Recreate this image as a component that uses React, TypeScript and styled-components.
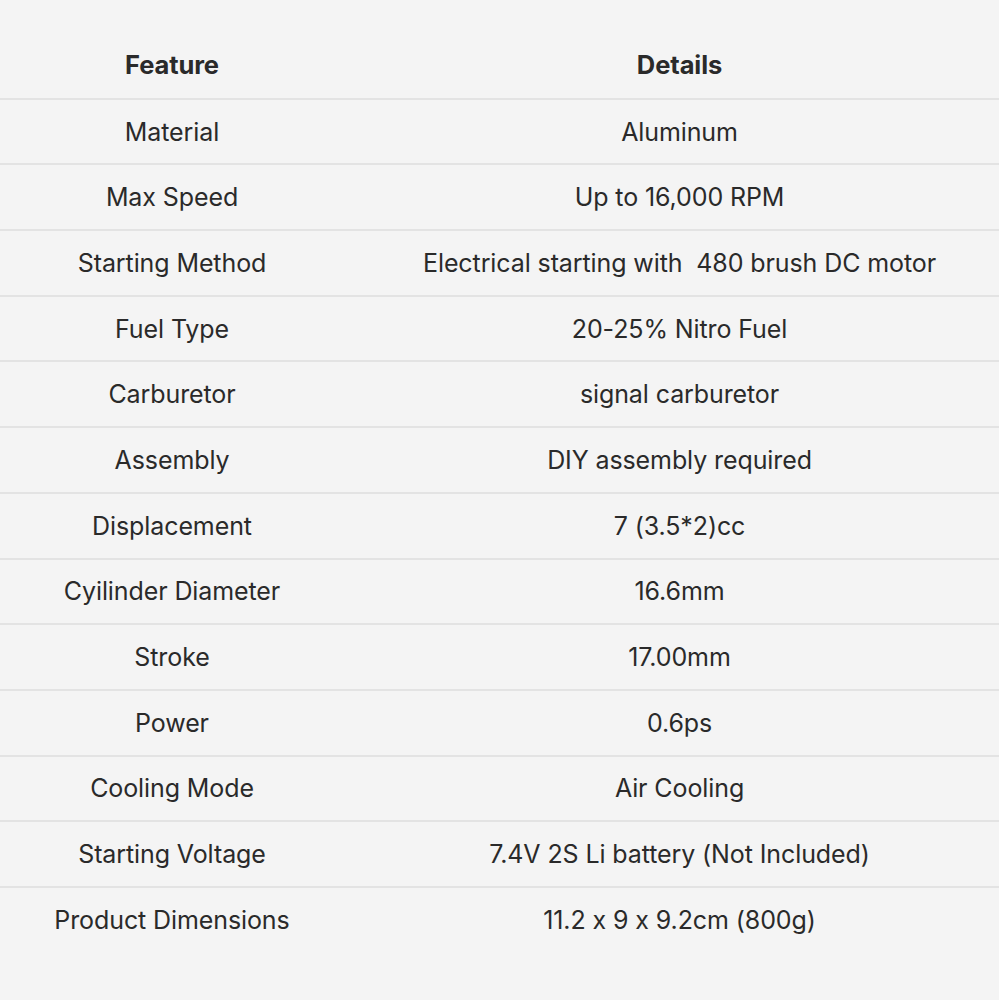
import React, { FC, ReactElement } from 'react';
import styled, { createGlobalStyle } from 'styled-components';

const GlobalStyle = createGlobalStyle`
  html, body {
    margin: 0;
    padding: 0;
    background: #f4f4f4;
    overflow-x: hidden;
  }
  body {
    font-family: Inter, "Noto Sans", sans-serif;
    font-feature-settings: "calt" 0;
    color: #2a2a2a;
  }
`;

const specList = [
  { feature: 'Material', details: 'Aluminum' },
  { feature: 'Max Speed', details: 'Up to 16,000 RPM' },
  {
    feature: 'Starting Method',
    details: 'Electrical starting with \u00a0480 brush DC motor',
  },
  { feature: 'Fuel Type', details: '20-25% Nitro Fuel' },
  { feature: 'Carburetor', details: 'signal carburetor' },
  { feature: 'Assembly', details: 'DIY assembly required' },
  { feature: 'Displacement', details: '7 (3.5*2)cc' },
  { feature: 'Cyilinder Diameter', details: '16.6mm' },
  { feature: 'Stroke', details: '17.00mm' },
  { feature: 'Power', details: '0.6ps' },
  { feature: 'Cooling Mode', details: 'Air Cooling' },
  {
    feature: 'Starting Voltage',
    details: '7.4V 2S Li battery (Not Included)',
  },
  { feature: 'Product Dimensions', details: '11.2 x 9 x 9.2cm (800g)' },
];

const App: FC = (): ReactElement => {
  return (
    <>
      <GlobalStyle />
      <Page>
        <SpecTable>
          <Row $head>
            <Cell $head>Feature</Cell>
            <Cell $head $wide>
              Details
            </Cell>
          </Row>
          {specList.map((spec, idx) => {
            return (
              <Row key={idx}>
                <Cell>{spec.feature}</Cell>
                <Cell $wide>{spec.details}</Cell>
              </Row>
            );
          })}
        </SpecTable>
      </Page>
    </>
  );
};

export default App;

const Page = styled.div`
  width: 999px;
  min-height: 1000px;
  padding-top: 32px;
  box-sizing: border-box;
`;
const SpecTable = styled.div`
  display: flex;
  flex-direction: column;
`;
const Row = styled.div<{ $head?: boolean }>`
  display: grid;
  grid-template-columns: 344px 1fr;
  height: 65.7px;
  box-sizing: border-box;
  border-top: ${(p) => (p.$head ? 'none' : '2px solid #e3e3e3')};
`;
const Cell = styled.div<{ $head?: boolean; $wide?: boolean }>`
  display: flex;
  align-items: center;
  justify-content: center;
  padding-left: ${(p) => (p.$wide ? '16px' : '0')};
  font-size: ${(p) => (p.$head ? '25.5px' : '25px')};
  font-weight: ${(p) => (p.$head ? 700 : 400)};
  letter-spacing: -0.1px;
  white-space: pre;
`;
